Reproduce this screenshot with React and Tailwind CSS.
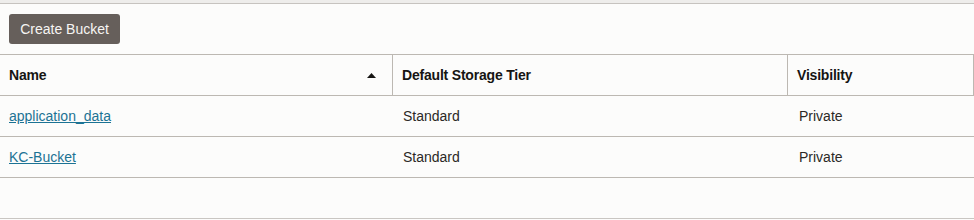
import React from 'react';

const buckets = [
  { name: 'application_data', tier: 'Standard', visibility: 'Private' },
  { name: 'KC-Bucket', tier: 'Standard', visibility: 'Private' },
];

const SortUp = () => (
  <svg width="9" height="5" viewBox="0 0 9 5" className="shrink-0">
    <path d="M0 5 L4.5 0 L9 5 Z" fill="#161513" />
  </svg>
);

export default function App() {
  return (
    <div
      className="w-[974px] h-[220px] bg-[#fcfcfb] text-[#161513] overflow-hidden"
      style={{ fontFamily: '"Liberation Sans", Arial, sans-serif' }}
    >
      <div className="h-[3px] bg-[#eeedeb]" />
      <div className="h-px bg-[#c6c3bf]" />

      <div className="h-[50px] px-[9px] pt-[10px]">
        <button className="h-[30px] w-[111px] rounded-[3px] bg-[#665f5b] text-[14px] text-[#f6f5f3]">
          Create Bucket
        </button>
      </div>

      <div className="border-t border-[#bcb8b2]">
        <div className="flex h-[41px] border-b border-[#bcb8b2] text-[14px] font-bold tracking-[-0.2px]">
          <div className="flex w-[393px] items-center justify-between border-r border-[#bcb8b2] pl-[9px] pr-[16px]">
            <span>Name</span>
            <SortUp />
          </div>
          <div className="flex w-[395px] items-center border-r border-[#bcb8b2] pl-[9px]">
            Default Storage Tier
          </div>
          <div className="flex flex-1 items-center border-r border-[#bcb8b2] pl-[9px]">
            Visibility
          </div>
        </div>

        {buckets.map((b) => (
          <div key={b.name} className="flex h-[41px] border-b border-[#bcb8b2] text-[14px]">
            <div className="flex w-[393px] items-center pl-[9px]">
              <a href="#" className="text-[#1c7394] underline">
                {b.name}
              </a>
            </div>
            <div className="flex w-[395px] items-center pl-[10px] text-[#2b2926]">{b.tier}</div>
            <div className="flex flex-1 items-center pl-[11px] text-[#2b2926]">{b.visibility}</div>
          </div>
        ))}

        <div className="h-[41px] border-b border-[#c9c6c2]" />
      </div>
    </div>
  );
}
